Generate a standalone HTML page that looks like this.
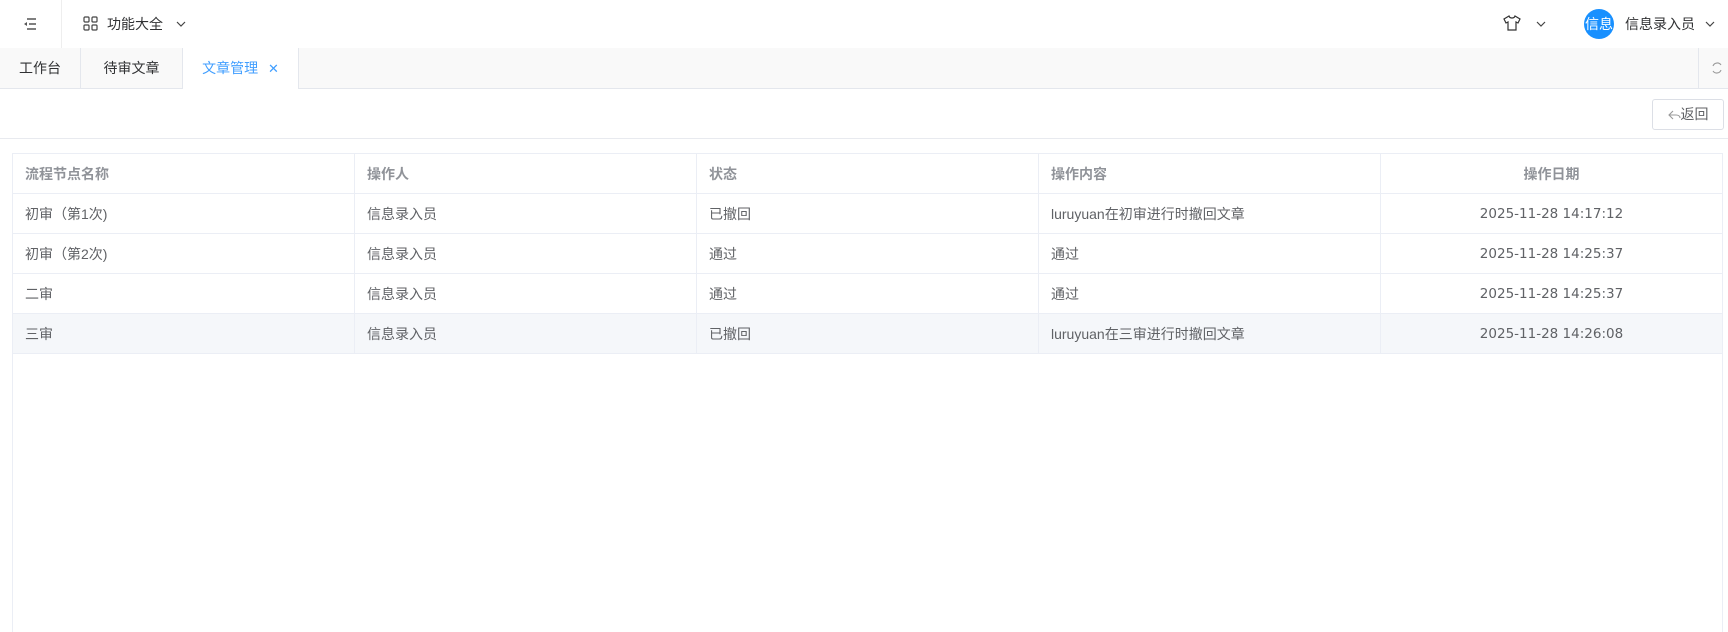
<!DOCTYPE html>
<html style="height:632px;overflow:hidden"><head><meta charset="utf-8"><style>
*{box-sizing:border-box;margin:0;padding:0}
body{width:1728px;height:632px;overflow:hidden;background:#fff;font-family:"Liberation Sans","Noto Sans CJK SC",sans-serif;font-size:14px;color:#303133;position:relative}
.hdr{position:absolute;left:0;top:0;width:1728px;height:48px;background:#fff}
.sep{position:absolute;left:61px;top:0;width:1px;height:48px;background:#eee}
.tabs{position:absolute;left:0;top:48px;width:1728px;height:41px;background:#f9f9f9;border-bottom:1px solid #e4e7ed}
.tab{position:absolute;top:0;height:40px;line-height:40px;text-align:center;border-right:1px solid #e4e7ed;color:#303133;font-size:14px}
.t{position:absolute;font-size:14px;line-height:20px}
table{position:absolute;left:12px;top:153px;width:1711px;border-collapse:collapse;table-layout:fixed}
td,th{border:1px solid #ebeef5;height:40px;padding:0 12px;text-align:left;font-size:14px;color:#606266;font-weight:normal}
th{color:#909399;font-weight:bold}
.c{text-align:center}
.d{font-family:"DejaVu Sans",sans-serif;font-size:13.5px}
tr.g td{background:#f5f7fa}
</style></head><body>
<div class="hdr">
<svg style="position:absolute;left:22px;top:16px" width="16" height="16" viewBox="0 0 16 16"><path d="M5 3h9M7 8h7M5 13h9" stroke="#555" stroke-width="1.5"/><path d="M5 6l-3 2 3 2z" fill="#555"/></svg>
<div class="sep"></div>
<svg style="position:absolute;left:83px;top:16px" width="15" height="15" viewBox="0 0 15 15" fill="none" stroke="#444" stroke-width="1.2"><rect x="1" y="1" width="5" height="5" rx="1"/><rect x="9" y="1" width="5" height="5" rx="1"/><rect x="1" y="9" width="5" height="5" rx="1"/><rect x="9" y="9" width="5" height="5" rx="1"/></svg>
<div class="t" style="left:107px;top:14px;color:#303133">功能大全</div>
<svg style="position:absolute;left:176px;top:21px" width="10" height="6" viewBox="0 0 10 6"><path d="M1 1l4 4 4-4" stroke="#444" fill="none" stroke-width="1.2"/></svg>
<svg style="position:absolute;left:1503px;top:15px" width="18" height="16" viewBox="0 0 18 16"><path d="M6 1L1 4l2 4 2-1v8h8V7l2 1 2-4-5-3c-.5 1.5-1.5 2-3 2S6.5 2.5 6 1z" fill="none" stroke="#333" stroke-width="1.2"/></svg>
<svg style="position:absolute;left:1536px;top:21px" width="10" height="6" viewBox="0 0 10 6"><path d="M1 1l4 4 4-4" stroke="#444" fill="none" stroke-width="1.2"/></svg>
<div style="position:absolute;left:1584px;top:9px;width:30px;height:30px;border-radius:50%;background:#1890ff;color:#fff;font-size:14px;line-height:30px;text-align:center;overflow:hidden;white-space:nowrap">信息</div>
<div class="t" style="left:1625px;top:14px">信息录入员</div>
<svg style="position:absolute;left:1705px;top:21px" width="10" height="6" viewBox="0 0 10 6"><path d="M1 1l4 4 4-4" stroke="#444" fill="none" stroke-width="1.2"/></svg>
</div>
<div class="tabs">
<div class="tab" style="left:0;width:81px">工作台</div>
<div class="tab" style="left:81px;width:102px">待审文章</div>
<div class="tab" style="left:183px;width:116px;background:#fff;color:#409eff;height:41px">文章管理 <span style="margin-left:6px;font-size:13px">✕</span></div>
<div style="position:absolute;left:1698px;top:0;width:1px;height:40px;background:#e4e7ed"></div>
<svg style="position:absolute;left:1711px;top:13px" width="12" height="14" viewBox="0 0 12 14"><path d="M2 5a4.5 4.5 0 0 1 8-1M10 9a4.5 4.5 0 0 1-8 1" stroke="#999" fill="none" stroke-width="1.1"/></svg>
</div>
<div style="position:absolute;left:1652px;top:99px;width:72px;height:31px;border:1px solid #dcdfe6;border-radius:3px;color:#606266;font-size:14px;line-height:29px;text-align:center"><svg width="13" height="10" viewBox="0 0 13 10" style="vertical-align:-1px"><path d="M5 1L1 5l4 4M1 5h7c2 0 4 1 4 3" stroke="#999" fill="none" stroke-width="1.1"/></svg>返回</div>
<div style="position:absolute;left:0;top:138px;width:1728px;height:1px;background:#e8eaef"></div>
<div style="position:absolute;left:12px;top:153px;width:1711px;height:480px;border:1px solid #ebeef5;border-bottom:none"></div>
<table>
<tr><th>流程节点名称</th><th>操作人</th><th>状态</th><th>操作内容</th><th class="c">操作日期</th></tr>
<tr><td>初审（第1次)</td><td>信息录入员</td><td>已撤回</td><td>luruyuan在初审进行时撤回文章</td><td class="c d">2025-11-28 14:17:12</td></tr>
<tr><td>初审（第2次)</td><td>信息录入员</td><td>通过</td><td>通过</td><td class="c d">2025-11-28 14:25:37</td></tr>
<tr><td>二审</td><td>信息录入员</td><td>通过</td><td>通过</td><td class="c d">2025-11-28 14:25:37</td></tr>
<tr class="g"><td>三审</td><td>信息录入员</td><td>已撤回</td><td>luruyuan在三审进行时撤回文章</td><td class="c d">2025-11-28 14:26:08</td></tr>
</table>
</body></html>
